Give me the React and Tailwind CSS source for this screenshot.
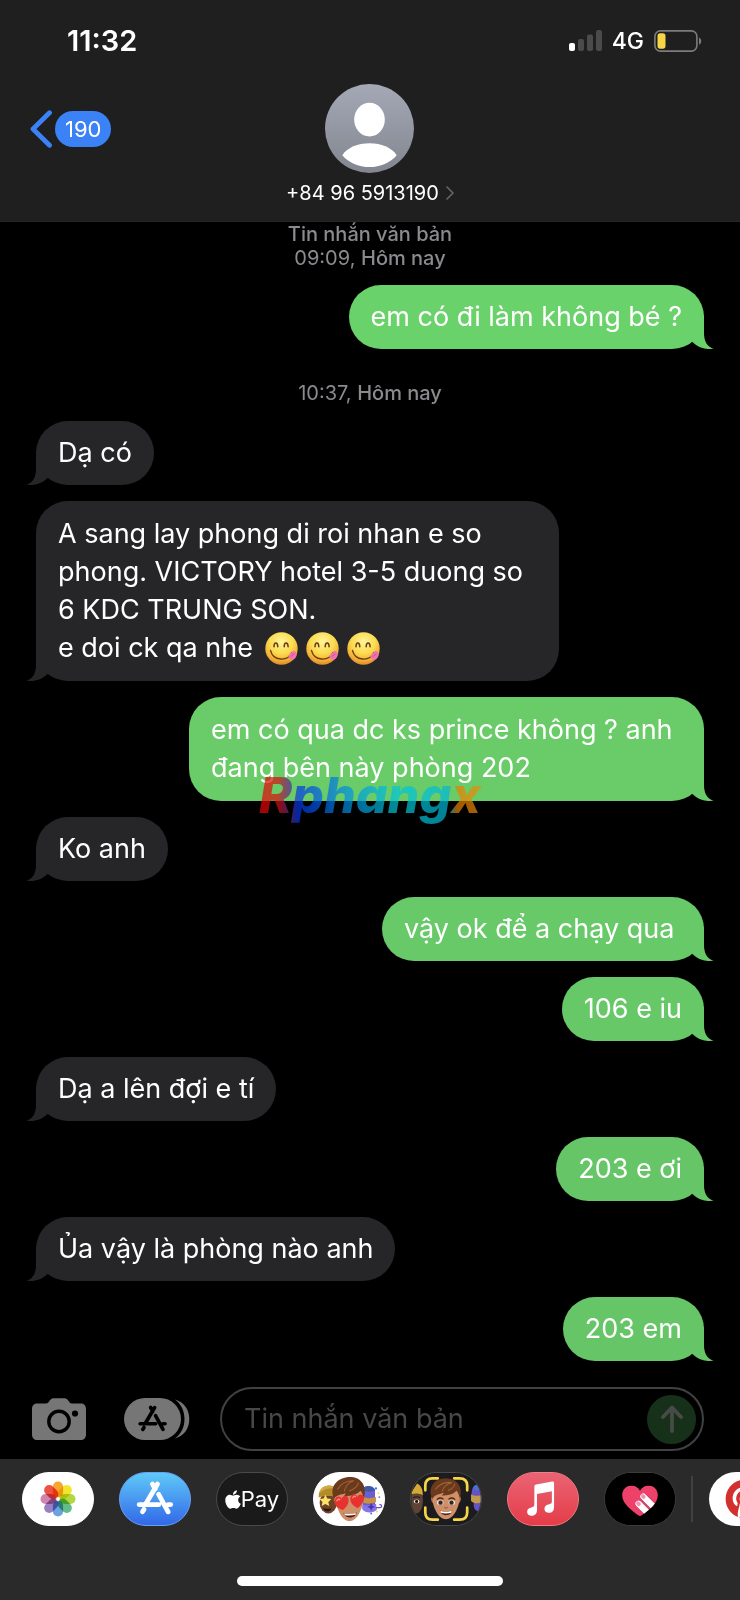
import React from "react";
import { FaApple, FaPinterest } from "react-icons/fa";

const MESSAGES = [
  { type: "time", time: "09:09", title: "Tin nhắn văn bản", gap: "" },
  { type: "out", text: "em có đi làm không bé ?", tone: "bg-[#6ad26a] text-[#6ad26a]", gap: "mt-[15px]" },
  { type: "time", time: "10:37", gap: "mt-8" },
  { type: "in", text: "Dạ có" },
  {
    type: "in",
    text: "A sang lay phong di roi nhan e so phong. VICTORY hotel 3-5 duong so 6 KDC TRUNG SON.",
    extra: "e doi ck qa nhe",
    long: true,
    width: "max-w-[523px]",
  },
  {
    type: "out",
    text: "em có qua dc ks prince không ? anh đang bên này phòng 202",
    tone: "bg-[#69cc68] text-[#69cc68]",
    long: true,
    width: "max-w-[515px]",
    mark: true,
  },
  { type: "in", text: "Ko anh" },
  { type: "out", text: "vậy ok để a chạy qua\u00a0", tone: "bg-[#67c968] text-[#67c968]" },
  { type: "out", text: "106 e iu", tone: "bg-[#67c868] text-[#67c868]" },
  { type: "in", text: "Dạ a lên đợi e tí" },
  { type: "out", text: "203 e ơi", tone: "bg-[#66c667] text-[#66c667]" },
  { type: "in", text: "Ủa vậy là phòng nào anh" },
  { type: "out", text: "203 em", tone: "bg-[#66c566] text-[#66c566]" },
];

function YumFace() {
  return (
    <svg viewBox="0 0 33 33" role="img" aria-label="😋" className="h-[33px] w-[33px]">
      <defs>
        <radialGradient id="yum" cx="0.5" cy="0.3" r="0.72">
          <stop offset="0" stopColor="#fff59a" />
          <stop offset="0.5" stopColor="#fbdb4f" />
          <stop offset="0.8" stopColor="#f3ae35" />
          <stop offset="1" stopColor="#d9852a" />
        </radialGradient>
      </defs>
      <circle cx="16.5" cy="16.5" r="16.2" fill="url(#yum)" />
      <g fill="none" stroke="#6b3b12" strokeLinecap="round">
        <path d="M9 14.800c0-5 3.600-5 3.800 0M19.200 14.800c0-5 3.700-5 3.900 0" strokeWidth="1.500" />
        <path d="M5.500 18.500c2.500 10.500 17 11.500 21.500 2" strokeWidth="1.300" />
      </g>
      <path d="M23.500 23.500l5-4.800c2.200.5 3.600 2 3.100 4.700-.6 2.600-3.200 5-5.800 4-1.600-.8-2.800-2.300-2.300-3.900z" fill="#f073ae" />
      <path d="M25.700 24.800l3.600-3" stroke="#cf4687" strokeWidth="0.900" />
    </svg>
  );
}

function Tail({ flip }) {
  return (
    <svg
      viewBox="0 0 28 34"
      aria-hidden="true"
      className={
        flip
          ? "absolute bottom-0 -right-[10px] h-[34px] w-7 -scale-x-100"
          : "absolute bottom-0 -left-[10px] h-[34px] w-7"
      }
      fill="currentColor"
    >
      <path d="M10 0V18C10 26 7 32 .5 33.600C8 35.200 16 32.500 21 27.600L28 22V0Z" />
    </svg>
  );
}

function Watermark() {
  return (
    <span
      className="absolute -bottom-[29px] left-[66px] z-10 whitespace-nowrap bg-[linear-gradient(90deg,#f00000_0%,#d81010_10%,#0038e8_19%,#0090e0_40%,#00c8d8_62%,#00b8d8_84%,#e88000_88%,#e89010_100%)] bg-clip-text px-1 text-[50px] font-extrabold italic leading-[70px] text-transparent opacity-70"
    >
      Rphangx
    </span>
  );
}

function Bubble({ m }) {
  const out = m.type === "out";
  return (
    <li className={`flex ${out ? "justify-end" : "justify-start"} ${m.gap ?? "mt-4"}`}>
      <div
        className={`relative rounded-[32px] px-[22px] ${m.long ? "py-[14px]" : "py-[13px]"} ${m.width ?? ""} ${
          out ? m.tone : "bg-[#262628] text-[#262628]"
        }`}
      >
        <Tail flip={out} />
        <p className="relative text-[27px] leading-[38px] text-white">
          {m.text}
          {m.extra && (
            <span className="flex items-center">
              {m.extra}
              <span className="ml-3 flex gap-2">
                <YumFace />
                <YumFace />
                <YumFace />
              </span>
            </span>
          )}
        </p>
        {m.mark && <Watermark />}
      </div>
    </li>
  );
}

function TimeStamp({ m }) {
  return (
    <li className={`text-center text-[20px] leading-6 text-[#8a8a8f] ${m.gap}`}>
      {m.title && <div className="font-medium">{m.title}</div>}
      <div>
        {m.time}, <span className="font-medium">Hôm nay</span>
      </div>
    </li>
  );
}

function StatusBar() {
  return (
    <div className="flex h-20 items-center justify-between pl-[67px] pr-[38px] pt-[2px]">
      <time className="text-[29px] font-semibold leading-8">11:32</time>
      <div className="flex items-center gap-[10px]">
        <svg viewBox="0 0 33 22" className="h-[22px] w-[33px]" aria-label="Signal">
          <rect x="0" y="13" width="6" height="8" rx="2" fill="#fff" />
          <rect x="9" y="9" width="6" height="12" rx="2" fill="#4b4b4b" />
          <rect x="18" y="4.500" width="6" height="16.500" rx="2" fill="#4b4b4b" />
          <rect x="27" y="0" width="6" height="21" rx="2" fill="#4b4b4b" />
        </svg>
        <span className="text-[23px] font-medium leading-8">4G</span>
        <svg viewBox="0 0 48 22" className="h-[22px] w-12" aria-label="Battery">
          <rect x="0.900" y="0.900" width="42" height="20.200" rx="5.500" fill="none" stroke="#7c7c7c" strokeWidth="1.600" />
          <rect x="3.500" y="3.300" width="8" height="15.400" rx="2.600" fill="#f8d546" />
          <path d="M45 7.500c3 1.500 3 5.800 0 7.300z" fill="#7c7c7c" />
        </svg>
      </div>
    </div>
  );
}

function Header() {
  return (
    <header className="border-b border-[#262626] bg-[#1f1f1f]">
      <StatusBar />
      <nav className="grid grid-cols-[1fr_auto_1fr] items-start px-[30px] pb-[14px] pt-1">
        <button type="button" aria-label="Quay lại, 190 tin nhắn" className="mt-[26px] flex items-center gap-[3px] justify-self-start">
          <svg viewBox="0 0 22 38" className="h-[38px] w-[22px]" aria-hidden="true">
            <path d="M19.500 2.800L3 19l16.500 16.200" fill="none" stroke="#3b82f7" strokeWidth="4.800" strokeLinecap="round" strokeLinejoin="round" />
          </svg>
          <span className="rounded-full bg-[#3b82f7] px-[10px] text-[22px] leading-9">190</span>
        </button>
        <button type="button" className="flex flex-col items-center gap-[6px]">
          <svg viewBox="0 0 90 90" className="h-[89px] w-[89px]" aria-hidden="true">
            <defs>
              <linearGradient id="av" x1="0" y1="0" x2="0" y2="1">
                <stop offset="0" stopColor="#a5a9b6" />
                <stop offset="1" stopColor="#828690" />
              </linearGradient>
            </defs>
            <circle cx="45" cy="45" r="45" fill="url(#av)" />
            <ellipse cx="45" cy="36" rx="15.500" ry="17" fill="#fff" />
            <path d="M17.500 72C23 64 33 60 45 60s22 4 27.500 12C66 79.500 56 84 45 84s-21-4.500-27.500-12z" fill="#fff" />
          </svg>
          <span className="flex items-center gap-[7px] text-[20px] leading-7">
            +84 96 5913190
            <svg viewBox="0 0 8 14" className="h-[14px] w-2" aria-hidden="true">
              <path d="M1 1l6 6-6 6" fill="none" stroke="#66666a" strokeWidth="1.600" strokeLinecap="round" strokeLinejoin="round" />
            </svg>
          </span>
        </button>
        <span />
      </nav>
    </header>
  );
}

function StoreGlyph() {
  return (
    <g fill="none" strokeLinecap="round">
      <path d="M38.600 11.500L26.200 32.500M33.300 11.500l3 5M39.800 22.200L49.600 40.300M19.500 32.800H40M49.500 32.800H52.300M24.600 37.800L23 40.300" />
    </g>
  );
}

function Composer() {
  return (
    <form className="flex items-center pb-2 pl-8 pr-9 pt-[26px]" onSubmit={(e) => e.preventDefault()}>
      <button type="button" aria-label="Máy ảnh" className="shrink-0">
        <svg viewBox="0 0 54 42" className="h-[42px] w-[54px]" aria-hidden="true">
          <path d="M5.500 5.500H14c1.500 0 2.200-.8 3.200-2.200C18.500 1.200 19.700.3 21.600.3h10.800c1.900 0 3.100.9 4.400 3 1 1.400 1.700 2.200 3.200 2.200h8.500C52 5.500 54 7.500 54 11v25.500c0 3.500-2 5.500-5.500 5.500h-43C2 42 0 40 0 36.500V11c0-3.500 2-5.500 5.500-5.500z" fill="#767676" />
          <circle cx="27" cy="23.500" r="10.200" fill="none" stroke="#000" strokeWidth="3.400" />
          <circle cx="43" cy="15.500" r="3.100" fill="#000" />
        </svg>
      </button>
      <button type="button" aria-label="Ứng dụng" className="ml-[38px] shrink-0">
        <svg viewBox="0 0 66 42" className="h-[42px] w-[66px]" aria-hidden="true">
          <path d="M51 1.500C60 4 65.300 11.500 65.300 21S60 38 51 40.500C57 36 60.500 29.500 60.500 21S57 6 51 1.500z" fill="#767676" />
          <rect width="57" height="42" rx="21" fill="#767676" />
          <g transform="translate(1.300 0.800) scale(0.760)" stroke="#000" strokeWidth="4.800">
            <StoreGlyph />
          </g>
        </svg>
      </button>
      <div className="ml-[30px] flex h-16 min-w-0 flex-1 items-center rounded-full border-2 border-[#414143] pl-[22px] pr-[6px]">
        <input
          type="text"
          aria-label="Tin nhắn văn bản"
          placeholder="Tin nhắn văn bản"
          className="min-w-0 flex-1 bg-transparent text-[27px] leading-9 text-white outline-none placeholder:text-[#48484a]"
        />
        <button type="submit" aria-label="Gửi" className="flex h-[49px] w-[49px] shrink-0 items-center justify-center rounded-full bg-[#17301a]">
          <svg viewBox="0 0 24 28" className="h-7 w-6" aria-hidden="true">
            <path d="M12 26V3M3 12l9-9.500L21 12" fill="none" stroke="#474b48" strokeWidth="3.800" strokeLinecap="round" strokeLinejoin="round" />
          </svg>
        </button>
      </div>
    </form>
  );
}

const PETALS = ["#f7a62f", "#f3e52e", "#b4d645", "#62bd86", "#6ba3dc", "#9a80c0", "#cf85ae", "#ee5242"];

function PhotosIcon() {
  return (
    <svg viewBox="0 0 72 54" className="h-full w-full" aria-hidden="true">
      <rect width="72" height="54" fill="#fff" />
      {PETALS.map((c, i) => (
        <rect
          key={c}
          x="30.700"
          y="8.800"
          width="10.600"
          height="16.500"
          rx="5.300"
          fill={c}
          className="mix-blend-multiply"
          transform={`rotate(${i * 45} 36 27)`}
        />
      ))}
    </svg>
  );
}

function StoreIcon() {
  return (
    <svg viewBox="0 0 72 54" className="h-full w-full" aria-hidden="true">
      <defs>
        <linearGradient id="store" x1="0" y1="0" x2="0" y2="1">
          <stop offset="0" stopColor="#5fc9f8" />
          <stop offset="1" stopColor="#3268e8" />
        </linearGradient>
      </defs>
      <rect width="72" height="54" fill="url(#store)" />
      <g stroke="#fff" strokeWidth="5">
        <StoreGlyph />
      </g>
    </svg>
  );
}

function StickersIcon() {
  return (
    <svg viewBox="0 0 72 54" className="h-full w-full" aria-hidden="true">
      <rect width="72" height="54" fill="#fff" />
      <ellipse cx="14.500" cy="31" rx="9" ry="11" fill="#6d4327" />
      <path d="M4.500 25c0-8 5-12 11-12s8 4 8 9v3.500c-6-2-13-2-19 0z" fill="#b58b2a" />
      <path d="M5 21c1-5 5-8 10-8 4 0 6 1 7 3-7-1-13 1-17 5z" fill="#d3aa42" />
      <path d="M11.500 22.500l1.900 4 4.300.5-3.200 3 1 4.300-4-2.200-3.900 2.200.9-4.300-3.200-3 4.300-.5z" fill="#fbe36a" />
      <path d="M9 36c3 1.500 6 1.500 9 .5-1 4-7 5-9-.5z" fill="#2a1713" />
      <path d="M50 18c0-5 13-5 13 0v19c-3 4-10 4-13 0z" fill="#6c5fd0" />
      <path d="M50 18c0-6 12-6 13 0-3 2-10 2-13 0z" fill="#3f5aa8" />
      <path d="M50 25c4 1.500 9 1.500 14 0v5.500c-5 2-10 2-14 0z" fill="#c8923f" />
      <path d="M50 33c5 1.500 10 1 14-1l1 6c-3 4-12 4-15 0z" fill="#8675e8" />
      <path d="M59 31l1.200 3 3 1.200-3 1.200-1.200 3-1.200-3-3-1.200 3-1.200z" fill="#4a35a8" />
      <path d="M64 36h4c3 0 2-4-.5-3" fill="none" stroke="#704cbd" strokeWidth="1.300" />
      <g fill="#3478f6"><circle cx="64" cy="16" r="1.200" /><circle cx="67.500" cy="25" r=".9" /><circle cx="59" cy="42" r="1" /></g>
      <g fill="#fbd74c"><circle cx="66.500" cy="21" r=".9" /><circle cx="65" cy="40" r="1" /></g>
      <path d="M21.500 23c-2 1-2 7 2 9M50.500 23c2 1 2 7-2 9" fill="#b87650" />
      <path d="M21.500 20c3-6 26-7 29 0 1 5 .5 13-3 20-2.500 6-6.500 10-11 10s-8.500-4-11-10c-3.500-7-5-14-4-20z" fill="#cf9069" />
      <path d="M20.500 27c-5-12 2-20.500 13-22.500C45 2.500 56 10 51.500 26.500c-1-4-2-6-3.500-8-4 4-9 5.500-17.500 5.500 1-1 2-2 2-3-4 1.500-10 1.500-12 6z" fill="#6b3a1c" />
      <path d="M24 17c4-7 10-9 17-9-6 2-9 6-10 11M36 19c5-2 9-5 10-9" fill="none" stroke="#9c6238" strokeWidth="1.200" />
      <path d="M30 41.500c4 2 10 1.500 14-.5-1 6-11 7.500-14 .5z" fill="#4c171a" />
      <path d="M31 42c4 1 8 .8 12-.4v1.800c-4 1-8 1-11.500.4z" fill="#fff" />
      <path d="M29.500 38.500c-5.500-2-9.500-5.500-8.200-10.500 1.200-4.500 5.700-4.500 7-1.300 1.500-4.200 6.600-4 7.200.3.600 4.500-2 8.500-6 11.500z" fill="#e8322f" />
      <path d="M45 36.500c-5.500-2.500-8.800-7-7.300-11.800 1.500-3.800 5.800-3.300 6.800 0 1.800-3.700 6.700-3 7 .8.300 4.500-3 8.700-6.500 11z" fill="#e8322f" />
      <path d="M23.500 29c.5-1.800 1.800-2.200 3-1.300M40 25.800c.5-1.600 1.600-2 2.800-1.200" fill="none" stroke="#ff8f86" strokeWidth="1.400" strokeLinecap="round" />
    </svg>
  );
}

function MemojiIcon() {
  return (
    <svg viewBox="0 0 72 54" className="h-full w-full" aria-hidden="true">
      <rect width="72" height="54" fill="#1c1c1e" />
      <path d="M0 20c5 0 10 0 11.500 3 1 6 1 16-5.500 19H0z" fill="#5f4334" />
      <path d="M0 20L6 11c4 2 6 6 6 12-4-2-8-2-12-1z" fill="#d4aa35" />
      <ellipse cx="5.500" cy="29.500" rx="2.800" ry="2" fill="#fff" /><circle cx="5.500" cy="29.500" r="1.700" fill="#24160f" />
      <path d="M2 26c2-1.500 5-1.500 7 0" fill="none" stroke="#2a1a12" strokeWidth="1.200" />
      <path d="M64 15c2-4 8-3 8-3v28c-6 0-8-4-7-10-3-4-3-11-1-15z" fill="#6553c4" />
      <path d="M62 22c3 2 7 2 10 1v8c-4 1-8 0-10-2z" fill="#c39a4a" />
      <path d="M64 15c2-4 8-3 8-3v6c-3 1-6 0-8-3z" fill="#4a70cf" />
      <path d="M22.500 24c-3 0-2.500 7 1 8M49.500 24c3 0 2.500 7-1 8" fill="#b87650" />
      <path d="M22.500 19c4-5 23-6 27 0 1 7 .5 14-3 20.500-3 5.500-6.500 8.500-10.500 8.500s-8-3-10.500-8.500c-3.500-6.500-4-13.500-3-20.500z" fill="#cf8f68" />
      <path d="M22 27C17 17 22 8 31.500 6 42 4 55 9 50.500 26.500c-1-4-2-6-3.500-8-4 4-9 5-15.500 5 1-1 2-2 2-3-4 1.500-10 2-11.500 6.500z" fill="#6b3a1c" />
      <path d="M25 17c4-5 10-8 17-7-5 1-9 5-10 9M38 18c4-1 7-4 7-7" fill="none" stroke="#9c6238" strokeWidth="1.200" />
      <path d="M27 27.300c1.800-1.500 4.200-1.500 6-.3M39 27c1.800-1.200 4.200-1.200 6 .3" fill="none" stroke="#4e2a14" strokeWidth="1.400" strokeLinecap="round" />
      <ellipse cx="30" cy="30.800" rx="3.300" ry="2.400" fill="#f6f1ea" /><ellipse cx="42" cy="30.800" rx="3.300" ry="2.400" fill="#f6f1ea" />
      <circle cx="30.300" cy="30.800" r="2.300" fill="#302923" /><circle cx="41.700" cy="30.800" r="2.300" fill="#302923" />
      <path d="M34.400 35.500c1 1.300 2.300 1.300 3.300 0" fill="none" stroke="#a3603d" strokeWidth="1.300" />
      <path d="M29.500 39c4 1.500 9 1.500 13 0-1 6-11 7-13 0z" fill="#5d201b" />
      <path d="M30 39.200c4 1.300 8 1.300 12 0l-.5 2c-4 1-7 1-11 0z" fill="#fff" />
      <path d="M14.500 18v-5c0-5 2-7.500 7.500-7.500h5.500M44.500 5.500H50c5.500 0 8 2.500 8 7.500v5M58 36v5c0 5-2.500 7.500-8 7.500h-5.500M27.500 48.500H22c-5.500 0-7.500-2.500-7.500-7.500v-5" fill="none" stroke="#f7d548" strokeWidth="2.800" strokeLinecap="round" />
    </svg>
  );
}

function MusicIcon() {
  return (
    <svg viewBox="0 0 72 54" className="h-full w-full" aria-hidden="true">
      <defs>
        <linearGradient id="music" x1="0" y1="0" x2="0" y2="1">
          <stop offset="0" stopColor="#ea6474" />
          <stop offset="1" stopColor="#e53c48" />
        </linearGradient>
      </defs>
      <rect width="72" height="54" fill="url(#music)" />
      <path d="M27 14.500c0-1.500.5-2.200 2-2.600l16.500-3c1.300-.2 2 .3 2 1.600V35c0 4.200-2 6.300-5.400 6.300-2.800 0-4.600-1.600-4.600-4.100 0-2.700 1.800-4.100 5-4.700 2.200-.4 2.700-1 2.700-2.800V19l-15.400 2.800V38c0 4.200-2 6.500-5.600 6.500-2.800 0-4.700-1.700-4.700-4.200 0-2.600 1.900-4 5-4.700 2-.4 2.500-1 2.500-2.800z" fill="#fff" />
    </svg>
  );
}

function HeartIcon() {
  return (
    <svg viewBox="0 0 72 54" className="h-full w-full" aria-hidden="true">
      <defs>
        <clipPath id="heart">
          <path d="M36 45C27 39 17.500 31.500 17.500 23c0-6 4.500-10 9.500-10 4 0 7 2 9 5.500C38 15 41 13 45 13c5 0 9.500 4 9.500 10 0 8.500-9.500 16-18.500 22z" />
        </clipPath>
      </defs>
      <rect width="72" height="54" fill="#000" />
      <g clipPath="url(#heart)">
        <rect width="72" height="54" fill="#ed4169" />
        <g strokeLinecap="round">
          <path d="M35 32.500L50 47.500M40 25L58 43" stroke="#b62e52" strokeWidth="7.500" />
          <path d="M34.500 32L50 47.500M39.500 24.500L58 43" stroke="#fff" strokeWidth="6.500" />
          <path d="M34 31.500l.8.800M39 24l.8.800" stroke="#f291b2" strokeWidth="4" />
        </g>
      </g>
    </svg>
  );
}

const APPS = [
  { name: "Ảnh", icon: <PhotosIcon />, edge: "border-white bg-white" },
  { name: "App Store", icon: <StoreIcon />, edge: "border-[#6aa0f3] bg-[#4a96f0]" },
  {
    name: "Apple Pay",
    icon: (
      <span className="flex h-full items-center justify-center">
        <FaApple className="h-[21px] w-4" />
        <span className="text-[22px] leading-6">Pay</span>
      </span>
    ),
    edge: "border-[#4a4a4a] bg-[#1a1a1a]",
  },
  { name: "Nhãn dán Memoji", icon: <StickersIcon />, edge: "border-white bg-white" },
  { name: "Memoji", icon: <MemojiIcon />, edge: "border-[#4a4a4a] bg-[#1c1c1e]" },
  { name: "Nhạc", icon: <MusicIcon />, edge: "border-[#ee7d86] bg-[#e8505e]" },
  { name: "Digital Touch", icon: <HeartIcon />, edge: "border-[#3c3c3e] bg-black" },
];

function AppDrawer() {
  return (
    <footer className="overflow-hidden bg-[#2a2a2a] pb-[14px] pt-[13px]">
      <div className="flex items-center gap-[25px] pl-[22px]">
        {APPS.map((a) => (
          <button
            key={a.name}
            type="button"
            aria-label={a.name}
            className={`h-[54px] w-[72px] shrink-0 overflow-hidden rounded-full border ${a.edge}`}
          >
            {a.icon}
          </button>
        ))}
        <div className="-ml-[10px] flex shrink-0 items-center gap-4">
          <span className="h-[46px] w-[2px] bg-[#414141]" />
          <button type="button" aria-label="Pinterest" className="flex h-[54px] w-[72px] items-center justify-center rounded-full bg-white">
            <FaPinterest className="h-10 w-10 text-[#d32f2c]" />
          </button>
        </div>
      </div>
      <div className="mx-auto mt-[50px] h-[10px] w-9/25 rounded-full bg-white" />
    </footer>
  );
}

export default function App() {
  return (
    <div className="flex min-h-screen flex-col overflow-hidden bg-black font-['Inter','Liberation_Sans',sans-serif] text-white">
      <Header />
      <main className="flex flex-1 flex-col">
        <ul className="flex-1 px-9">
          {MESSAGES.map((m, i) =>
            m.type === "time" ? <TimeStamp key={i} m={m} /> : <Bubble key={i} m={m} />
          )}
        </ul>
        <Composer />
      </main>
      <AppDrawer />
    </div>
  );
}
